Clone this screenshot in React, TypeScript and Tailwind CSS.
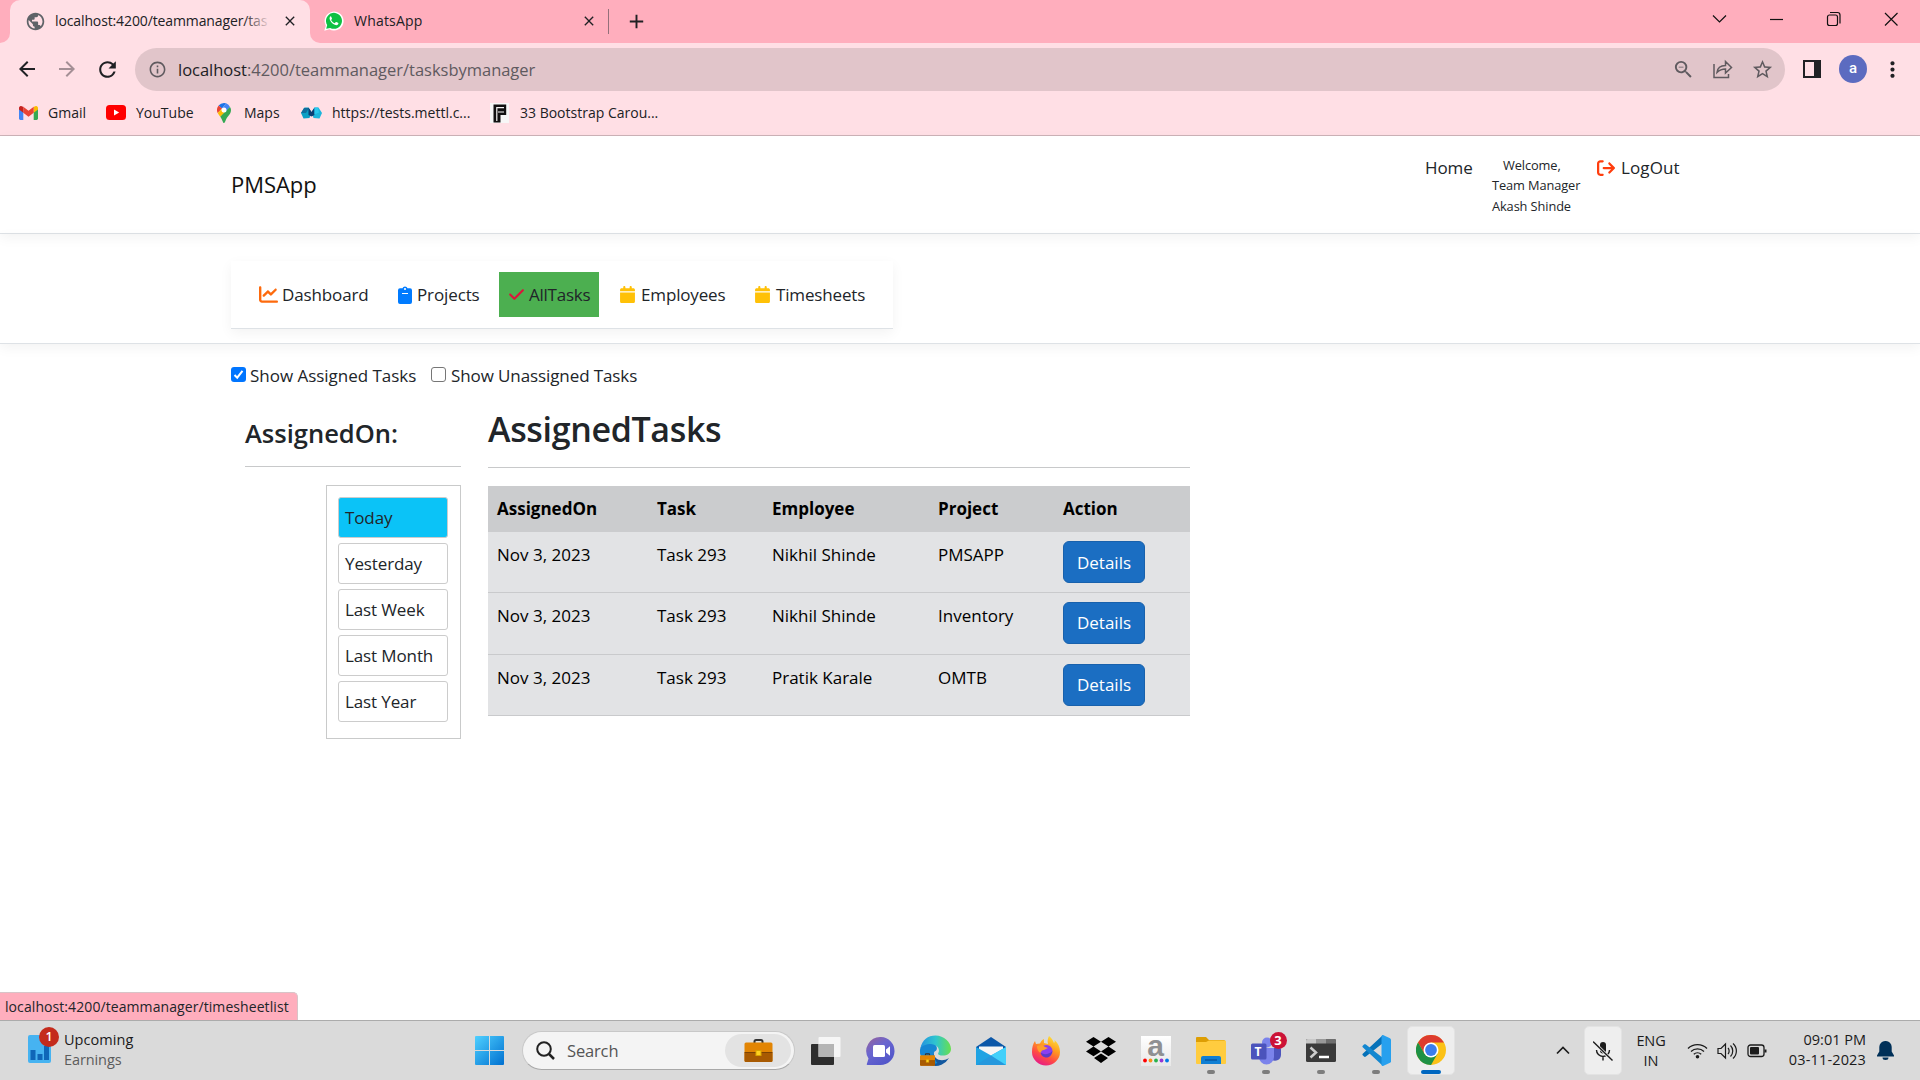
import React, { ReactNode } from "react";
import { FaArrowRightFromBracket, FaChartLine, FaCheck, FaCalendar } from "react-icons/fa6";
import { MdArrowBack, MdArrowForward, MdRefresh, MdInfoOutline, MdZoomOut, MdStarBorder, MdMoreVert, MdClose, MdAdd, MdPublic } from "react-icons/md";

function Gmail() {
  return (
    <svg width="19" height="14" viewBox="0 0 19 14">
      <path d="M0 2v10.5A1.4 1.4 0 0 0 1.4 14H4.3V5.4z" fill="#4285f4" />
      <path d="M19 2v10.5a1.4 1.4 0 0 1-1.4 1.5h-2.9V5.4z" fill="#34a853" />
      <path d="M14.7.8v6l4.3-3.2V2c0-1.7-1.8-2.6-3.2-1.6z" fill="#fbbc04" />
      <path d="M4.3 6.8v-6l5.2 4 5.2-4v6L9.500 10.700z" fill="#ea4335" />
      <path d="M0 2v1.600L4.300 6.800v-6L3.200.4C1.800-.600 0 .300 0 2z" fill="#c5221f" />
    </svg>
  );
}

function YouTube() {
  return (
    <svg width="20" height="15" viewBox="0 0 20 15">
      <rect width="20" height="15" rx="3.500" fill="#f00" />
      <path d="M8 4.500l5.200 3L8 10.500z" fill="#fff" />
    </svg>
  );
}

function MapsPin() {
  return (
    <svg width="14" height="20" viewBox="0 0 14 20">
      <path d="M7 0a7 7 0 0 0-5.400 2.600L5 5.500 9.100.3A7 7 0 0 0 7 0z" fill="#1a73e8" />
      <path d="M1.600 2.600A7 7 0 0 0 .7 10L5 5.500z" fill="#ea4335" />
      <path d="M9.100.3L5 5.500a2.700 2.700 0 0 0 4 3.400l4-4.800A7 7 0 0 0 9.100.3z" fill="#4285f4" />
      <path d="M.7 10c.6 1.300 1.500 2.400 2.500 3.700L9 8.900a2.700 2.700 0 0 1-4-3.400z" fill="#fbbc04" />
      <path d="M13 4.100L3.200 13.700C5.500 16.500 5.800 20 7 20s1.500-3.500 3.500-6C12.500 11.600 14 9.800 14 7c0-1-.3-2-1-2.900z" fill="#34a853" />
      <circle cx="7" cy="7" r="2.500" fill="#fff" />
    </svg>
  );
}

function Mettl() {
  return (
    <svg width="21" height="12" viewBox="0 0 21 12">
      <path d="M0 6L3.500.5h4l3 4.500-2 6-6 .5z" fill="#0b9fc4" />
      <path d="M3 1l5 0-3 5-5 0z" fill="#0e6f9e" />
      <path d="M21 6L17.500.5h-4l-3 4.500 2 6 6 .5z" fill="#1bb5dc" />
      <path d="M7.500.5l3 4.500 3-4.500V8l-3 1.500-3-1.500z" fill="#0a3f74" />
      <path d="M13.500.5H17l1 5-4.500 2z" fill="#29c8ee" />
    </svg>
  );
}

function Fletter() {
  return (
    <svg width="19" height="20" viewBox="0 0 19 20">
      <rect width="19" height="20" fill="#f7f7f7" />
      <path d="M3.500 1.500H16.200V12H10.500v7.500H3.500z" fill="#111" />
      <path d="M6.800 18V4.600H14M8 9h6" fill="none" stroke="#f7f7f7" strokeWidth="1.200" />
    </svg>
  );
}

function WhatsAppIcon() {
  return (
    <svg width="20" height="20" viewBox="0 0 20 20">
      <path d="M.3 19.700l1.500-5A9.500 9.500 0 1 1 5.400 18.300z" fill="#fff" />
      <path d="M2.200 17.800l1-3.700a8 8 0 1 1 3 2.800z" fill="#0fc143" />
      <path d="M6.600 5.300c-1.200.8-1.300 2.300-.5 3.900 1 2 2.500 3.600 4.700 4.600 1.700.8 3.200.3 3.600-1.200.1-.5 0-.6-.4-.8l-1.700-.8c-.3-.1-.5 0-.7.200l-.8 1c-1.700-.7-2.900-1.800-3.700-3.300l.8-1c.1-.2.100-.4 0-.6l-.8-1.800c-.1-.3-.3-.3-.5-.2z" fill="#fff" />
    </svg>
  );
}

function Clipboard() {
  return (
    <svg width="14" height="18" viewBox="0 0 14 18">
      <path d="M2 2.300h2.500a2.600 2.600 0 0 1 5 0H12a2 2 0 0 1 2 2V16a2 2 0 0 1-2 2H2a2 2 0 0 1-2-2V4.300a2 2 0 0 1 2-2z" fill="#007bff" />
      <circle cx="7" cy="3" r="1.100" fill="#fff" />
      <path d="M4 7.500h6" stroke="#fff" strokeWidth="1" />
    </svg>
  );
}

const tabText = "font-['Open_Sans',sans-serif] text-[14px] tracking-[-0.12px]";

function Tabs() {
  return (
    <div className="flex h-[43px] bg-[#ffaebd] text-[#202124]">
      <div className="flex w-[10px] items-end bg-[#ffdfe5]">
        <div className="h-[43px] w-full rounded-br-[10px] bg-[#ffaebd]" />
      </div>
      <div className={`flex w-[300px] items-center rounded-t-[10px] bg-[#ffdfe5] pb-px pl-[15px] pr-3 ${tabText}`}>
        <MdPublic className="shrink-0 text-[#5f6368]" size={21} />
        <div className="relative ml-[9px] w-[216px] whitespace-nowrap pb-px">
          localhost:4200/teammanager/tas
          <div className="absolute inset-y-0 right-0 w-7 bg-gradient-to-r from-transparent to-[#ffdfe5]" />
        </div>
        <MdClose className="ml-[11px] shrink-0" size={16} />
      </div>
      <div className="flex w-[10px] bg-[#ffdfe5]">
        <div className="h-[43px] w-full rounded-bl-[10px] bg-[#ffaebd]" />
      </div>
      <div className={`my-[9px] flex w-[289px] items-center border-r border-[#93707a] pb-px pl-1 ${tabText}`}>
        <WhatsAppIcon />
        <span className="ml-[10px] flex-1 pb-px tracking-[0.2px]">WhatsApp</span>
        <MdClose className="mr-[11px]" size={16} />
      </div>
      <div className="flex flex-1 items-center pl-[16px]">
        <MdAdd size={23} />
      </div>
      <div className="flex items-center pb-[6px] pr-[6px]">
        <svg width="215" height="20" viewBox="0 0 215 20" fill="none" stroke="#111" strokeWidth="1.200">
          <path d="M14 6.500l6.500 6.500L27 6.500" />
          <path d="M71 10.500h13" />
          <rect x="128.500" y="6" width="10" height="10.500" rx="2" />
          <path d="M131 3.500h7.500a2.500 2.500 0 0 1 2.500 2.500v8.500" />
          <path d="M186 4l12.500 12.500M198.500 4L186 16.500" />
        </svg>
      </div>
    </div>
  );
}

function Toolbar() {
  return (
    <div className="flex h-[52px] items-center bg-[#ffdfe5] text-[#202124]">
      <div className="flex w-[135px] items-center pl-[15px]">
        <MdArrowBack size={24} />
        <MdArrowForward size={24} className="ml-4 text-[#a48f95]" />
        <MdRefresh size={25} className="ml-4" />
      </div>
      <div className="flex h-[43px] w-[1650px] items-center rounded-full bg-[#e1c5ca] pl-[13px] pr-[11px] text-[#5f5a5f]">
        <MdInfoOutline size={19} />
        <span className="ml-[11px] flex-1 pt-[2px] font-['Open_Sans',sans-serif] text-[16.500px] tracking-[-0.02px]">
          <span className="text-[#202124]">localhost</span>:4200/teammanager/tasksbymanager
        </span>
        <MdZoomOut size={23} />
        <svg className="ml-[17px]" width="22" height="20" viewBox="0 0 22 20" fill="none" stroke="currentColor" strokeWidth="1.500">
          <path d="M2 5v13.500h14.500V15" />
          <path d="M5 13.500c.5-4.500 3.500-7 8.500-7V2.500L19.500 8.500l-6 5.500v-4c-4 0-6 1-8.500 3.500z" />
        </svg>
        <MdStarBorder className="ml-[17px]" size={23} />
      </div>
      <div className="ml-[18px] h-[18px] w-[18px] border-[2.500px] border-r-[7px] border-[#202124]" />
      <div className="ml-[18px] flex h-7 w-7 items-center justify-center rounded-full bg-[#5c6bc0] pb-[2px] font-[Roboto,sans-serif] text-[15px] font-medium text-white">a</div>
      <MdMoreVert className="ml-[13px]" size={25} />
    </div>
  );
}

const bookmarks: { icon: ReactNode; label: string; cls: string }[] = [
  { icon: <Gmail />, label: "Gmail", cls: "w-[87px] gap-[10px]" },
  { icon: <YouTube />, label: "YouTube", cls: "w-[111px] gap-[10px]" },
  { icon: <MapsPin />, label: "Maps", cls: "w-[84px] gap-[13px]" },
  { icon: <Mettl />, label: "https://tests.mettl.c...", cls: "w-[189px] gap-[10px]" },
  { icon: <Fletter />, label: "33 Bootstrap Carou...", cls: "w-[200px] gap-[11px]" },
];

function Bookmarks() {
  return (
    <div className="flex h-[41px] border-b border-[#cdb3b8] bg-[#ffdfe5] pb-[5px] pl-[19px] font-['Open_Sans',sans-serif] text-[14px] text-[#202124]">
      {bookmarks.map((b) => (
        <div key={b.label} className={`flex shrink-0 items-center whitespace-nowrap ${b.cls}`}>
          {b.icon}
          <span>{b.label}</span>
        </div>
      ))}
    </div>
  );
}

function Header() {
  return (
    <header className="flex h-[98px] border-b border-[#dee2e6] bg-white pl-[231px] shadow-[0_4px_12px_rgba(0,0,0,0.05)]">
      <div className="flex w-[1194px] items-center text-[22px] tracking-[-0.05px] text-[#111]">PMSApp</div>
      <div className="w-[67px] pt-[18px] leading-[27px]">Home</div>
      <div className="w-[105px] pt-[19px] text-[12.800px] leading-[20.300px] tracking-[-0.1px]">
        <div className="pl-[11px]">Welcome,</div>
        <div>Team Manager</div>
        <div>Akash Shinde</div>
      </div>
      <div className="flex h-[64px] items-center gap-[6px]">
        <FaArrowRightFromBracket size={18} className="text-[#ff3d0d]" />
        <span className="tracking-[0.1px]">LogOut</span>
      </div>
    </header>
  );
}

function Nav() {
  return (
    <div className="h-[110px] border-b border-[#dee2e6] pl-[231px] pt-[27px] shadow-[0_4px_12px_rgba(0,0,0,0.05)]">
      <nav className="flex h-[68px] w-[662px] items-center border-b border-[#dee2e6] bg-white pl-[28px] tracking-[-0.12px] shadow-[0_4px_12px_rgba(0,0,0,0.05)]">
        <div className="flex w-[139px] items-center gap-[4px]"><FaChartLine size={19} className="text-[#fd6a0d]" />Dashboard</div>
        <div className="flex w-[101px] items-center gap-[5px]"><Clipboard />Projects</div>
        <div className="flex h-[45px] w-[100px] items-center gap-[4px] bg-[#4caf50] pl-[9px] tracking-[-0.25px]"><FaCheck size={17} className="text-[#dc143c]" />AllTasks</div>
        <div className="ml-[20px] flex w-[135px] items-center gap-[5px] tracking-[-0.15px]"><FaCalendar size={17} className="text-[#ffc107]" />Employees</div>
        <div className="flex items-center gap-[5px] tracking-[-0.15px]"><FaCalendar size={17} className="text-[#ffc107]" />Timesheets</div>
      </nav>
    </div>
  );
}

const ranges = ["Today", "Yesterday", "Last Week", "Last Month", "Last Year"];
const rows = [
  ["Nov 3, 2023", "Task 293", "Nikhil Shinde", "PMSAPP"],
  ["Nov 3, 2023", "Task 293", "Nikhil Shinde", "Inventory"],
  ["Nov 3, 2023", "Task 293", "Pratik Karale", "OMTB"],
];

function Tasks() {
  return (
    <main className="flex-1 bg-transparent pl-[231px]">
      <div className="flex h-[63px] items-center">
        <div className="mb-[2px] flex h-[15px] w-[15px] items-center justify-center rounded-[3px] bg-[#0075ff]">
          <svg width="11" height="11" viewBox="0 0 11 11"><path d="M1.500 6l2.700 2.700L9.500 1.800" stroke="#fff" strokeWidth="2" fill="none" /></svg>
        </div>
        <span className="ml-[4px] w-[181px] tracking-[-0.03px]">Show Assigned Tasks</span>
        <div className="mb-[2px] h-[15px] w-[15px] rounded-[3px] border border-[#767676] bg-white" />
        <span className="ml-[5px]">Show Unassigned Tasks</span>
      </div>
      <div className="flex pl-[14px]">
        <aside className="w-[216px]">
          <h4 className="flex h-[60px] items-center border-b border-[#c8c9ca] pb-[6px] text-[25.500px] font-semibold tracking-[0px]">AssignedOn:</h4>
          <div className="ml-[81px] mt-[18px] flex h-[254px] w-[135px] flex-col gap-[5px] border border-[#c9caca] pl-[11px] pt-[11px]">
            {ranges.map((r, i) => (
              <div key={r} className={`flex h-[41px] w-[110px] items-center rounded-[3px] border border-[#cccccc] pl-[6px] tracking-[-0.12px] ${i === 0 ? "bg-[#0bc3f7]" : "bg-white"}`}>{r}</div>
            ))}
          </div>
        </aside>
        <section className="ml-[27px] w-[702px]">
          <h2 className="flex h-[61px] items-center border-b border-[#c8c9ca] pb-[15px] text-[34px] font-semibold tracking-[-0.35px]">AssignedTasks</h2>
          <table className="mt-[18px] w-full table-fixed border-collapse text-left text-black">
            <colgroup>
              <col className="w-[160px]" />
              <col className="w-[115px]" />
              <col className="w-[166px]" />
              <col className="w-[125px]" />
              <col className="w-[136px]" />
            </colgroup>
            <thead className="bg-[#cbccce]">
              <tr className="h-[46px]">
                {["AssignedOn", "Task", "Employee", "Project", "Action"].map((h) => (
                  <th key={h} className="px-[9px] text-[17px] font-bold tracking-[0px]">{h}</th>
                ))}
              </tr>
            </thead>
            <tbody className="bg-[#e2e3e5] tracking-[0px]">
              {rows.map((r, i) => (
                <tr key={i} className={`border-b border-[#c9cacc] ${i === 0 ? "h-[60px]" : i === 1 ? "h-[62px]" : "h-[61px]"}`}>
                  {r.map((c) => (
                    <td key={c} className="px-[9px] pt-[9px] align-top leading-[27px]">{c}</td>
                  ))}
                  <td className="px-[9px] pt-[9px] align-top">
                    <button className="flex h-[42px] w-[82px] items-center justify-center rounded-[6px] border border-[#1861ac] bg-[#1b6ec2] pt-px text-white">Details</button>
                  </td>
                </tr>
              ))}
            </tbody>
          </table>
        </section>
      </div>
    </main>
  );
}

function Briefcase({ w, h }: { w: number; h: number }) {
  return (
    <svg width={w} height={h} viewBox="0 0 28 23">
      <path d="M10 4V2.500C10 1.500 10.500 1 11.500 1h5c1 0 1.500.5 1.500 1.500V4" stroke="#333" strokeWidth="2" fill="none" />
      <rect y="3.500" width="28" height="19.500" rx="1.500" fill="#e28504" />
      <path d="M0 14h28v7.500a1.500 1.500 0 0 1-1.500 1.500h-25A1.500 1.500 0 0 1 0 21.500z" fill="#a85a02" />
      <path d="M0 13.500h28" stroke="#7c4303" />
      <rect x="11.500" y="11.500" width="5" height="5" fill="#ffd21f" stroke="#d9a300" />
    </svg>
  );
}

const icons: { name: string; running?: boolean; art: ReactNode }[] = [
  { name: "Task view", art: (
    <svg width="30" height="30" viewBox="0 0 30 30"><rect y="8" width="23" height="21" rx="1" fill="#2d2d2d" /><rect x="7.500" y="1" width="22" height="20" rx="1" fill="#fff" fillOpacity=".75" /><rect x="7.500" y="8" width="15.500" height="13" fill="#b5b5b5" /></svg>
  ) },
  { name: "Chat", art: (
    <svg width="30" height="30" viewBox="0 0 30 30"><defs><linearGradient id="chat" x1="0" x2=".7" y1="0" y2="1"><stop stopColor="#9a6296" /><stop offset=".45" stopColor="#6a66d0" /><stop offset="1" stopColor="#5055c9" /></linearGradient></defs><path d="M15 1a14 14 0 1 1-1 28H1.500c-.9 0-1-.8-.5-1.500l1.500-5A14 14 0 0 1 15 1z" fill="url(#chat)" /><rect x="7" y="9" width="12" height="12" rx="1.500" fill="#fff" /><path d="M20 13.500l4-3.200v9.400l-4-3.200z" fill="#fff" /></svg>
  ) },
  { name: "Edge", art: (
    <svg width="31" height="31" viewBox="0 0 31 31">
      <defs><linearGradient id="edg"><stop stopColor="#2493df" /><stop offset=".5" stopColor="#2fc5cf" /><stop offset="1" stopColor="#68e04e" /></linearGradient></defs>
      <path d="M0 15a15.500 15.500 0 0 0 29 8c-8 5-16 1-15.500-7z" fill="#12589f" />
      <path d="M0 16C0 8 9 5 14.500 9c3 2 3 6 1 7-4 2-1 9 2 12-8 4-17.500-3-17.500-12z" fill="#1687d3" />
      <path d="M.5 13C2 5 8 .5 15.500.5 24 .5 31 7 31 14c0 5-5 7-9.500 6.500-2-.2-4-1-3.200-2.500 2-3-.3-8.500-7.300-9C6 9 2 11 .5 13z" fill="url(#edg)" />
      <svg y="18" x="0" width="15" height="13"><Briefcase w={15} h={13} /></svg>
    </svg>
  ) },
  { name: "Mail", art: (
    <svg width="30" height="30" viewBox="0 0 30 30"><path d="M0 11L15 1l15 10v6H0z" fill="#0b57a8" /><path d="M3 10.500h24V20H3z" fill="#f5f5f5" /><path d="M0 11l15 8.500L30 11v18H0z" fill="#1fa3e3" /><path d="M30 11L15 19.500 24 29h6z" fill="#42d0fa" /><path d="M0 29L15 19.500 30 29z" fill="#2598dd" /></svg>
  ) },
  { name: "Firefox", art: (
    <svg width="30" height="30" viewBox="0 0 30 30">
      <defs><linearGradient id="ffx" x1=".8" x2=".3" y1="0" y2="1"><stop stopColor="#ffe83b" /><stop offset=".4" stopColor="#ff9a20" /><stop offset=".7" stopColor="#ff4a45" /><stop offset="1" stopColor="#e5198a" /></linearGradient></defs>
      <path d="M18 0c3 2 4 5 5 7 1-1 .7-2 .5-3C27 7 29 11 29 16a14 13.500 0 0 1-28 0C1 11 2 8 4 5l1 3 4-.5C10 5 11 4 13 3l0 4 4 1c-1-3 0-6 1-8z" fill="url(#ffx)" />
      <circle cx="15.500" cy="15" r="6" fill="#8b3ff0" /><path d="M6 10c3-1 6-1 8 1l3 1-4 2c-2 0-3 1-3 3-3-1-4-4-4-7z" fill="#ff9d2a" /><path d="M9.500 16c2 3 8 3 12-1-1 5-4 7-7 6.500s-5-3-5-5.500z" fill="#5c3bc7" />
    </svg>
  ) },
  { name: "Dropbox", art: (
    <svg width="30" height="27" viewBox="0 0 30 27"><path d="M7.500 0L15 4.800 7.500 9.600 0 4.800zM22.500 0L30 4.800 22.500 9.600 15 4.800zM7.500 9.600l7.500 4.800-7.500 4.800L0 14.400zM22.500 9.600l7.500 4.800-7.500 4.800-7.500-4.800zM15 16.500l7 4.500-7 5-7-5z" fill="#000" /></svg>
  ) },
  { name: "Assist", art: (
    <div className="flex h-[30px] w-[30px] flex-col items-center bg-gradient-to-b from-white to-[#e8e8e8]">
      <div className="h-[22px] font-['Liberation_Sans',sans-serif] text-[30px] font-bold leading-[19px] text-[#8f9092]">a</div>
      <svg width="28" height="5" viewBox="0 0 28 5"><circle cx="3" cy="2.500" r="1.900" fill="#f00" /><circle cx="8.500" cy="2.500" r="1.900" fill="#f7941d" /><circle cx="14" cy="2.500" r="1.900" fill="#2bb24c" /><circle cx="19.500" cy="2.500" r="1.900" fill="#9437d4" /><circle cx="25" cy="2.500" r="1.900" fill="#0078e8" /></svg>
    </div>
  ) },
  { name: "Explorer", running: true, art: (
    <svg width="30" height="27" viewBox="0 0 30 27"><path d="M0 1a1 1 0 0 1 1-1h9l3 3h15a1 1 0 0 1 1 1v6H0z" fill="#dd9e04" /><path d="M0 5h10l3-1.500h16a1 1 0 0 1 1 1V26a1 1 0 0 1-1 1H1a1 1 0 0 1-1-1z" fill="#ffcc3f" /><path d="M5 27v-6a2 2 0 0 1 2-2h16a2 2 0 0 1 2 2v6z" fill="#0f7fd4" /><path d="M9 23h12" stroke="#075199" strokeWidth="1.300" /></svg>
  ) },
  { name: "Teams", running: true, art: (
    <div className="relative">
      <svg width="30" height="30" viewBox="0 0 30 30"><circle cx="16" cy="6.500" r="5" fill="#7b83eb" /><path d="M21 12h8a1 1 0 0 1 1 1v6a6 6 0 0 1-9 5z" fill="#4d55bd" /><path d="M8 12h15v9a7.500 7.500 0 0 1-15 0z" fill="#7b83eb" /><rect y="7.500" width="15.500" height="16" rx="1.500" fill="#4b53bc" /></svg>
      <span className="absolute left-0 top-[8px] w-[15px] text-center font-['Open_Sans',sans-serif] text-[12px] font-bold leading-[15px] text-white">T</span>
      <span className="absolute -top-[4px] left-[19px] flex h-[17px] w-[17px] items-center justify-center rounded-full bg-[#cc1236] font-['Open_Sans',sans-serif] text-[13px] font-bold leading-none text-white">3</span>
    </div>
  ) },
  { name: "Terminal", running: true, art: (
    <svg width="30" height="23" viewBox="0 0 30 23"><rect width="30" height="23" rx="1.500" fill="#3a3a3a" /><path d="M1.500 0H10v4.500H0v-3A1.500 1.500 0 0 1 1.500 0z" fill="#c8c8c8" /><path d="M10 0h10v4.500H10z" fill="#999" /><path d="M20 0h8.500A1.500 1.500 0 0 1 30 1.500v3H20z" fill="#6e6e6e" /><path d="M4.500 8.500l5.500 5-5.500 5" stroke="#ccc" strokeWidth="2.500" fill="none" /><path d="M13 18h10" stroke="#fff" strokeWidth="2.500" /></svg>
  ) },
  { name: "Code", running: true, art: (
    <svg width="30" height="31" viewBox="0 0 30 31"><path d="M22 0L2 18.500c-.8.700-.8 1.300 0 2l1 1c.6.500 1.200.5 1.900 0L22 8z" fill="#0571b8" /><path d="M22 31L2 12.500c-.8-.7-.8-1.300 0-2l1-1c.6-.5 1.200-.5 1.900 0L22 23z" fill="#1387d0" /><path d="M22 0l7 3.200c.6.300 1 .9 1 1.600v21.400c0 .7-.4 1.300-1 1.600L22 31c-.8 0-1.500-.5-1.500-1.500v-28C20.500.8 21 0 22 0z" fill="#27a0ee" /></svg>
  ) },
];

function ChromeLogo() {
  return (
    <svg width="30" height="30" viewBox="0 0 30 30">
      <circle cx="15" cy="15" r="15" fill="#fbc116" />
      <path d="M15 7.500h13A15 15 0 0 0 2 7.500L8.500 18.750z" fill="#dd3b2e" />
      <path d="M8.500 18.750L2 7.500A15 15 0 0 0 15 30l6.500-11.250z" fill="#1e9145" />
      <circle cx="15" cy="15" r="7.500" fill="#fff" />
      <circle cx="15" cy="15" r="5.900" fill="#3b7ded" />
    </svg>
  );
}

function Taskbar() {
  return (
    <footer className="flex h-[60px] border-t border-[#ababab] bg-[#dadada] font-['Open_Sans',sans-serif] text-[14.500px] leading-[20px] text-[#1b1b1b]">
      <div className="flex w-[475px] pl-[28px] pt-[9px]">
        <div className="relative mt-[4px] h-[29px] w-[24px]">
          <svg width="24" height="29" viewBox="0 0 24 29"><rect y="1" width="23" height="28" rx="2" fill="#46b3f1" /><path d="M2.500 16h5v10h-5zM9.500 20h5v6h-5zM16 12h5v14h-5z" fill="#0f66b8" /></svg>
          <span className="absolute -top-[7px] left-[11px] flex h-[20px] w-[20px] items-center justify-center rounded-full bg-[#c42b1c] text-[12.500px] font-semibold leading-none text-white">1</span>
        </div>
        <div className="ml-[12px]">
          <div className="tracking-[0.05px]">Upcoming</div>
          <div className="tracking-[-0.1px] text-[#5c5c5c]">Earnings</div>
        </div>
      </div>
      <div className="flex w-[47px] items-center">
        <svg width="29" height="29" viewBox="0 0 29 29"><defs><linearGradient id="win" x2="1" y2="1"><stop stopColor="#4fd0ff" /><stop offset="1" stopColor="#0070d0" /></linearGradient></defs><path d="M0 1a1 1 0 0 1 1-1h13v14H0zM15 0h13a1 1 0 0 1 1 1v13H15zM0 15h14v14H1a1 1 0 0 1-1-1zM15 15h14v13a1 1 0 0 1-1 1H15z" fill="url(#win)" /></svg>
      </div>
      <div className="mt-[10px] flex h-[39px] w-[273px] items-center rounded-full border border-b-[#a8a8a8] border-[#c8c8c8] bg-[#f4f4f4] pl-[13px] pr-[3px]">
        <svg width="19" height="19" viewBox="0 0 19 19" fill="none" stroke="#222" strokeWidth="2"><circle cx="8" cy="8" r="6.800" /><path d="M12.500 12.500l5.500 5.500" strokeWidth="2.500" /></svg>
        <span className="ml-[12px] flex-1 text-[16.500px] tracking-[-0.15px] text-[#555]">Search</span>
        <div className="flex h-[33px] w-[66px] items-center justify-center rounded-full bg-[#e3e3e3] pb-px"><Briefcase w={29} h={23} /></div>
      </div>
      <div className="ml-[3px] flex">
        {icons.map((i) => (
          <div key={i.name} className="flex w-[55px] flex-col items-center">
            <div className="flex h-[59px] items-center">{i.art}</div>
            {i.running && <div className="-mt-[10px] h-[4px] w-[8px] shrink-0 rounded-full bg-[#7d7d7d]" />}
          </div>
        ))}
      </div>
      <div className="ml-[4px] mt-[5px] flex h-[49px] w-[48px] flex-col items-center rounded-[5px] border border-[#e3e3e3] bg-[#eeeeee] pt-[8px]">
        <ChromeLogo />
        <div className="mt-[5px] h-[4px] w-[20px] rounded-full bg-[#0067c0]" />
      </div>
      <div className="flex flex-1 items-center justify-end pr-[26px]">
        <svg width="14" height="9" viewBox="0 0 14 9"><path d="M1 7.500l6-6 6 6" stroke="#1b1b1b" strokeWidth="1.700" fill="none" /></svg>
        <div className="ml-[14px] flex h-[49px] w-[38px] items-center justify-center rounded-[5px] border border-[#e3e3e3] bg-[#eeeeee]">
          <svg width="20" height="20" viewBox="0 0 20 20" fill="none" stroke="#1b1b1b" strokeWidth="1.400"><rect x="7" y="1" width="6" height="11.500" rx="3" fill="#1b1b1b" stroke="none" /><path d="M3.500 9a6.500 6.500 0 0 0 13 0M10 15.500v4" /><path d="M0 .5l19.500 19" stroke="#eee" strokeWidth="3" /><path d="M0 .5l19.500 19" /></svg>
        </div>
        <div className="ml-[14px] w-[30px] text-center tracking-[-0.1px]">ENG<br />IN</div>
        <div className="ml-[21px] flex items-center gap-[9px]">
          <svg width="21" height="16" viewBox="0 0 21 16" fill="none" stroke="#1b1b1b" strokeWidth="1.300"><path d="M1 5.500a13.500 13.500 0 0 1 19 0M4 8.500a9.500 9.500 0 0 1 13 0M6.800 11.300a5.500 5.500 0 0 1 7.400 0" /><circle cx="10.500" cy="13.700" r="1.800" fill="#1b1b1b" stroke="none" /></svg>
          <svg width="21" height="18" viewBox="0 0 21 18" fill="none" stroke="#1b1b1b" strokeWidth="1.200"><path d="M1 6.500h3L8.500 2v14L4 11.500H1zM11 6c1.500 1.500 1.500 4.500 0 6M13.500 3.500c3 3 3 8 0 11M16 1.500c4.500 4 4.500 11 0 15" /></svg>
          <svg width="21" height="14" viewBox="0 0 21 14" fill="none" stroke="#1b1b1b" strokeWidth="1.300"><rect x="1" y="1" width="16" height="11.500" rx="2.500" /><rect x="3" y="3" width="9" height="7.500" rx="1" fill="#1b1b1b" stroke="none" /><path d="M18.500 5.500v3" strokeWidth="2" /></svg>
        </div>
        <div className="ml-[18px] w-[80px] whitespace-nowrap pb-[2px] text-right">
          <div>09:01 PM</div>
          <div className="tracking-[0.15px]">03-11-2023</div>
        </div>
        <svg className="ml-[11px]" width="17" height="19" viewBox="0 0 17 19"><path d="M8.500 0a6 6 0 0 1 6.200 6.200V10.500L17 14.500v1H0v-1l2.300-4V6.200A6 6 0 0 1 8.500 0zM5.500 16.500h6a3 2.500 0 0 1-6 0z" fill="#003058" /></svg>
      </div>
    </footer>
  );
}

export default function App() {
  return (
    <div className="flex h-[1080px] w-[1920px] flex-col overflow-hidden bg-white">
      <Tabs />
      <Toolbar />
      <Bookmarks />
      <div className="relative flex flex-1 flex-col font-['Open_Sans',sans-serif] text-[17px] tracking-[-0.1px] text-[#212529]">
        <Header />
        <Nav />
        <Tasks />
        <div className="absolute bottom-0 left-0 flex h-[28px] w-[298px] items-center whitespace-nowrap rounded-tr-[5px] border-r border-t border-[#d8c4c8] bg-[#ffaebd] pl-[5px] text-[14px] tracking-[0.08px]">localhost:4200/teammanager/timesheetlist</div>
      </div>
      <Taskbar />
    </div>
  );
}
